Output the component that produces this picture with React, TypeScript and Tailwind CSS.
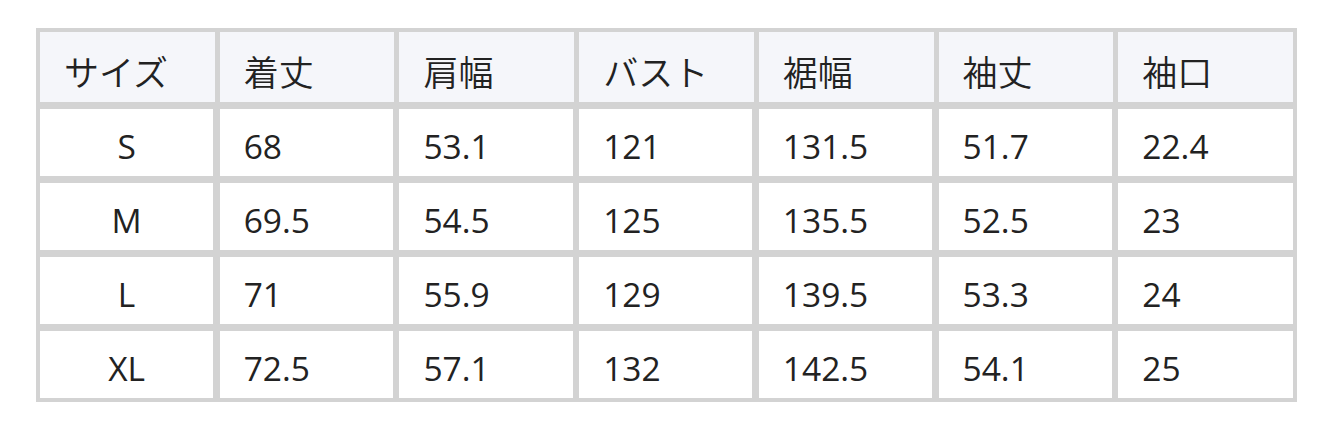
import React from "react";

const headers = ["サイズ", "着丈", "肩幅", "バスト", "裾幅", "袖丈", "袖口"];
const rows = [
  ["S", "68", "53.1", "121", "131.5", "51.7", "22.4"],
  ["M", "69.5", "54.5", "125", "135.5", "52.5", "23"],
  ["L", "71", "55.9", "129", "139.5", "53.3", "24"],
  ["XL", "72.5", "57.1", "132", "142.5", "54.1", "25"],
];

const font = { fontFamily: '"Open Sans", "Noto Sans CJK JP", sans-serif' };

export default function App() {
  return (
    <div className="w-[1332px] h-[429px] bg-white pt-[28px] pl-[36px]" style={font}>
      <div className="w-[1261px] bg-[#d3d3d3] p-[4px] flex flex-col gap-[6.5px] text-[#222222]">
        <div className="grid grid-cols-7 gap-x-[5px] h-[70px]">
          {headers.map((h) => (
            <div key={h} className="bg-[#f5f6fa] flex items-center pl-[24px] pt-[10px] text-[35px] font-[350] leading-none">
              {h}
            </div>
          ))}
        </div>
        {rows.map((r) => (
          <div key={r[0]} className="grid grid-cols-7 gap-x-[5px] h-[67.5px]">
            {r.map((c, i) => (
              <div
                key={i}
                className={
                  i === 0
                    ? "bg-white mr-[1.5px] flex items-center justify-center pt-[8px] text-[33.5px] leading-none"
                    : i === 6
                    ? "bg-white flex items-center pl-[24px] pt-[8px] text-[33.5px] leading-none"
                    : "bg-white mr-[1.5px] flex items-center pl-[24px] pt-[8px] text-[33.5px] leading-none"
                }
              >
                {c}
              </div>
            ))}
          </div>
        ))}
      </div>
    </div>
  );
}
